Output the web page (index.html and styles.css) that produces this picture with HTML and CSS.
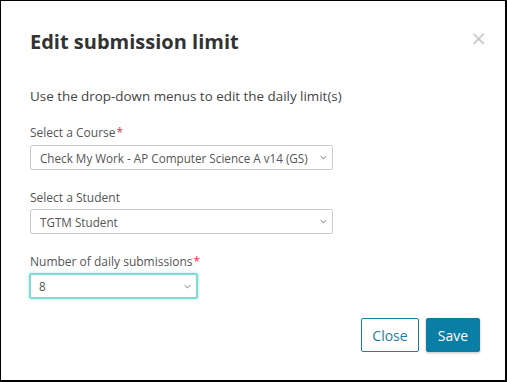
FILE: index.html
```html
<!DOCTYPE html>
<html>
<head>
<meta charset="utf-8">
<link rel="stylesheet" href="styles.css">
</head>
<body>
<div class="frame">
  <div class="modal">
    <header class="modal-header">
      <h1 class="title">Edit submission limit</h1>
      <button class="close-x" aria-label="Close">&times;</button>
    </header>
    <p class="intro">Use the drop-down menus to edit the daily limit(s)</p>
    <div class="field">
      <label class="label">Select a Course<span class="req">*</span></label>
      <div class="select wide"><span>Check My Work - AP Computer Science A v14 (GS)</span><svg class="chev" viewBox="0 0 10 6"><path d="M1 1l4 4 4-4" fill="none" stroke="#666" stroke-width="1.3"/></svg></div>
    </div>
    <div class="field">
      <label class="label">Select a Student</label>
      <div class="select wide"><span>TGTM Student</span><svg class="chev" viewBox="0 0 10 6"><path d="M1 1l4 4 4-4" fill="none" stroke="#666" stroke-width="1.3"/></svg></div>
    </div>
    <div class="field">
      <label class="label">Number of daily submissions<span class="req">*</span></label>
      <div class="select narrow focused"><span>8</span><svg class="chev" viewBox="0 0 10 6"><path d="M1 1l4 4 4-4" fill="none" stroke="#666" stroke-width="1.3"/></svg></div>
    </div>
    <footer class="actions">
      <button class="btn btn-outline">Close</button>
      <button class="btn btn-primary">Save</button>
    </footer>
  </div>
</div>
</body>
</html>
```
FILE: styles.css
```css
* { box-sizing: border-box; }
html, body { margin: 0; padding: 0; background: #fff; }
body { font-family: "Open Sans", "Noto Sans", sans-serif; color: #333; }
.frame {
  width: 507px;
  height: 382px;
  border-top: 1px solid #000;
  border-left: 1px solid #000;
  border-right: 2px solid #000;
  border-bottom: 2px solid #000;
  background: #fff;
}
.modal { padding: 0 25px 0 29px; }
.modal-header { display: flex; justify-content: space-between; align-items: flex-start; padding-top: 27px; }
.title { margin: 0; font-size: 20px; font-weight: 700; color: #333; line-height: 28px; }
.close-x { border: 0; background: none; padding: 0; margin: 0 -7px 0 0; font-size: 20px; line-height: 20px; color: #c8c8c8; font-family: "DejaVu Sans", sans-serif; cursor: pointer; }
.intro { margin: 30px 0 0; font-size: 13.4px; line-height: 20px; color: #444; }
.field { margin-top: 19px; display: flex; flex-direction: column; }
.field + .field { margin-top: 20px; }
.label { font-size: 12px; line-height: 16px; color: #555; margin-bottom: 3px; }
.field:first-of-type .label { margin-bottom: 4px; }
.req { color: #d9363e; margin-left: 1px; }
.select {
  height: 25px;
  border: 1px solid #ccc;
  border-radius: 2px;
  display: flex;
  align-items: center;
  justify-content: space-between;
  padding: 0 5px 0 9px;
  font-size: 11.7px;
  color: #555;
}
.wide { width: 303px; }
.narrow { width: 169px; margin-left: -1px; }
.focused { border: 2px solid #7fdcd3; box-shadow: 0 0 3px rgba(80, 210, 195, 0.6); padding-left: 8px; height: 26px; }
.chev { width: 7px; height: 5px; }
.actions { display: flex; justify-content: flex-end; gap: 7px; margin-top: 19px; }
.btn { height: 34px; font-family: inherit; font-size: 14px; border-radius: 2px; padding: 0; cursor: pointer; }
.btn-outline { width: 58px; background: #fff; border: 1px solid #1a7fa3; color: #1a7fa3; }
.btn-primary { width: 54px; background: #0a7ea4; border: 1px solid #0a7ea4; color: #fff; box-shadow: 0 1px 3px rgba(0,0,0,0.25); }
```
